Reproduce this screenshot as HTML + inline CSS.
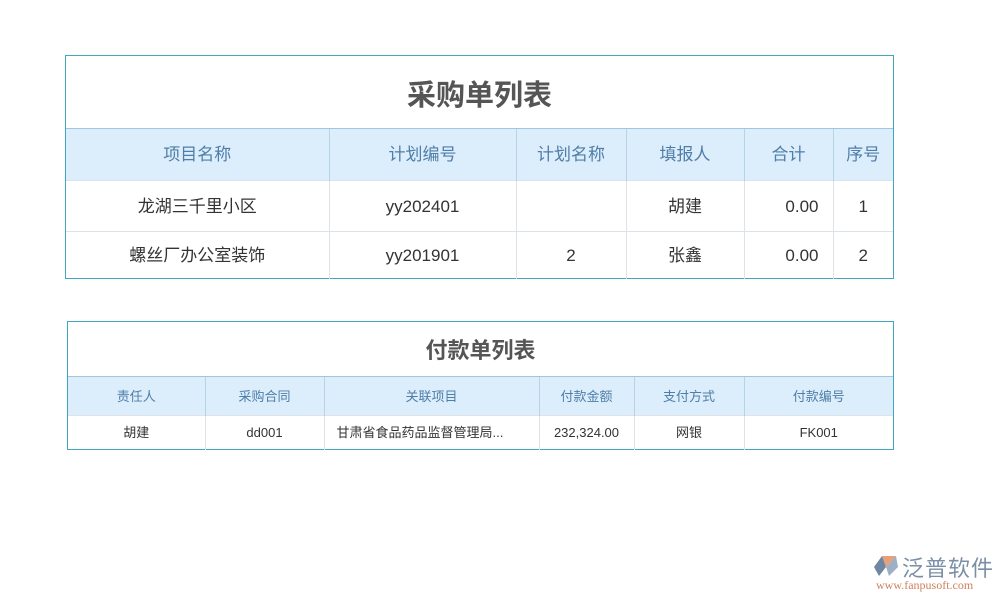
<!DOCTYPE html>
<html><head><meta charset="utf-8"><style>
body{margin:0;width:1000px;height:600px;background:#fff;position:relative;overflow:hidden;font-family:"Liberation Sans","Noto Sans CJK SC",sans-serif;}
.t{position:absolute;border:1px solid #3fa8bf;box-sizing:border-box;background:#fff;}
table{border-collapse:collapse;table-layout:fixed;width:100%;}
td{text-align:center;color:#333;border-left:1px solid #dde3e8;border-top:1px solid #dde3e8;padding:0;white-space:nowrap;overflow:hidden;vertical-align:middle;line-height:1;}
td:first-child{border-left:none}
tr.h td{background:#dcedfb;color:#4f7ea8;border-color:#b9d3e6;border-top:1px solid #9fc7de;}
.title{text-align:center;color:#555;font-weight:bold;}
</style></head><body>
<div class="t" style="left:65px;top:55px;width:829px;height:224px;">
<div class="title" style="height:72px;line-height:80px;font-size:29px;">采购单列表</div>
<table style="font-size:17px;">
<colgroup><col style="width:263px"><col style="width:187px"><col style="width:110px"><col style="width:118px"><col style="width:89px"><col></colgroup>
<tr class="h" style="height:52px"><td>项目名称</td><td>计划编号</td><td>计划名称</td><td>填报人</td><td>合计</td><td>序号</td></tr>
<tr style="height:51px"><td>龙湖三千里小区</td><td>yy202401</td><td></td><td>胡建</td><td style="text-align:right;padding-right:14px">0.00</td><td>1</td></tr>
<tr style="height:47px"><td>螺丝厂办公室装饰</td><td>yy201901</td><td>2</td><td>张鑫</td><td style="text-align:right;padding-right:14px">0.00</td><td>2</td></tr>
</table></div>
<div class="t" style="left:67px;top:321px;width:827px;height:129px;">
<div class="title" style="height:54px;line-height:58px;font-size:22px;">付款单列表</div>
<table style="font-size:13px;">
<colgroup><col style="width:137px"><col style="width:119px"><col style="width:215px"><col style="width:95px"><col style="width:110px"><col></colgroup>
<tr class="h" style="height:39px"><td>责任人</td><td>采购合同</td><td>关联项目</td><td>付款金额</td><td>支付方式</td><td>付款编号</td></tr>
<tr style="height:34px"><td>胡建</td><td>dd001</td><td style="text-align:left;padding-left:12px">甘肃省食品药品监督管理局...</td><td>232,324.00</td><td>网银</td><td>FK001</td></tr>
</table></div>
<div style="position:absolute;left:872px;top:552px;">
<svg width="28" height="24" viewBox="0 0 28 24" style="position:absolute;left:0;top:2px"><path d="M10 2 L24 2 L14 13 Z" fill="#e8a07a"/><path d="M2 13 L10 2 L14 13 L7 22 Z" fill="#6f86a2"/><path d="M14 13 L24 2 L26 13 L17 22 Z" fill="#9fb0c4"/></svg>
<div style="position:absolute;left:30px;top:-1px;font-size:22px;color:#7b8fa6;letter-spacing:1px;white-space:nowrap;">泛普软件</div>
<div style="position:absolute;left:4px;top:26px;font-size:12px;color:#d08060;font-family:'Liberation Serif',serif;white-space:nowrap">www.fanpusoft.com</div>
</div>
</body></html>
